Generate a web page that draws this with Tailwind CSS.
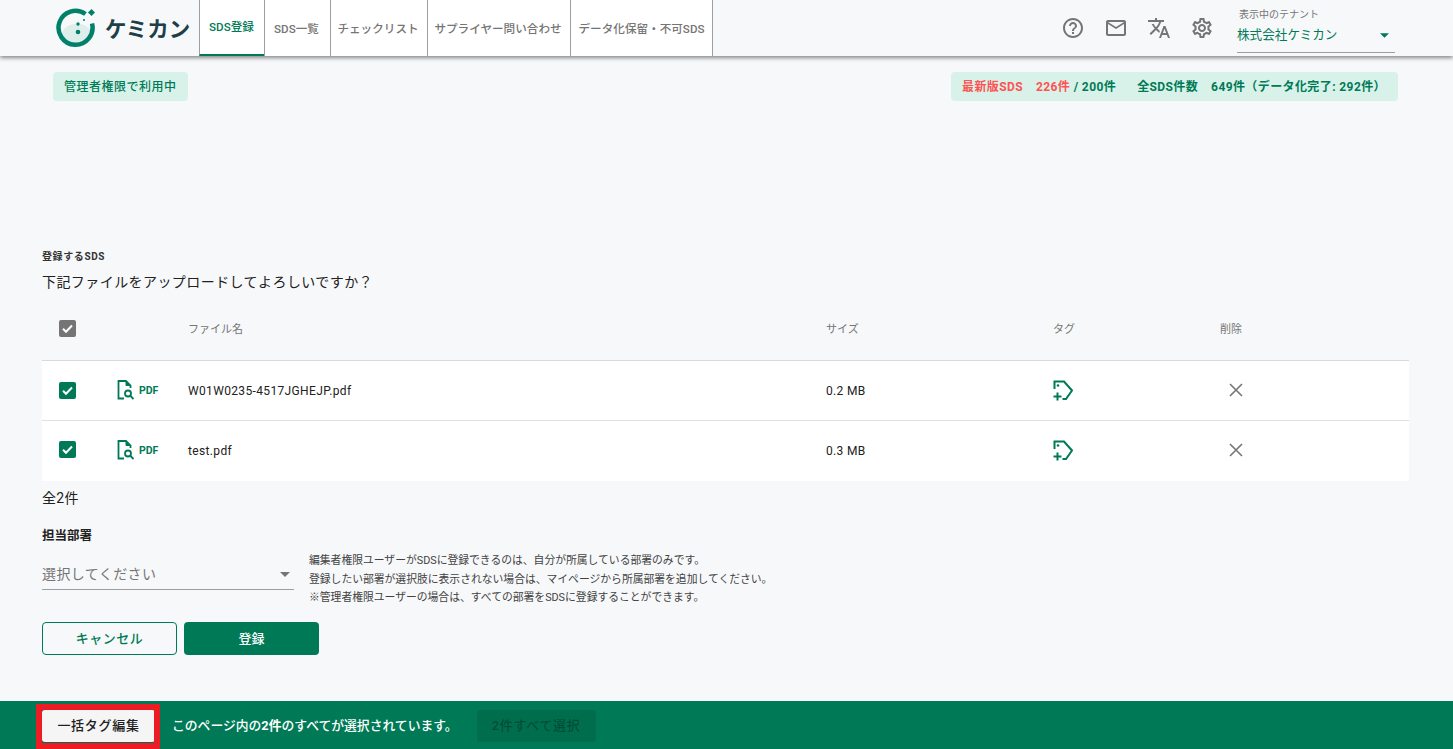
<!DOCTYPE html>
<html lang="ja">
<head>
  <meta charset="UTF-8" />
  <title>ケミカン</title>
  <script src="https://cdn.jsdelivr.net/npm/@tailwindcss/browser@4"></script>
</head>
<body class="h-[749px] overflow-hidden flex flex-col bg-[#f7f8fa] text-[#212121] font-['Roboto','Noto_Sans_CJK_JP',sans-serif]">

  <!-- header -->
  <header class="h-[56px] shrink-0 flex items-stretch bg-[#f7f8fa] shadow-[0_2px_4px_rgba(0,0,0,0.45)] relative pl-[56px] pr-[58px]">
    <div class="w-[143px] flex items-center gap-[8px]">
      <svg width="41" height="40" viewBox="0 0 41 40" class="shrink-0">
        <path d="M5 27 C9 13 30 12 35 24 C33 30 27 35 20 35 C13 35 8 32 5 27 Z" fill="#deeeea" />
        <path d="M29.500 6 A17 17 0 1 0 36 15.500" fill="none" stroke="#00806a" stroke-width="4.500" />
        <circle cx="22" cy="16" r="1.700" fill="#00806a" />
        <circle cx="22" cy="24" r="2.300" fill="#00806a" />
        <circle cx="28" cy="12" r="1" fill="#00806a" />
        <rect x="33" y="2" width="5" height="5" transform="rotate(45 35.500 4.500)" fill="#00806a" />
      </svg>
      <span class="text-[21.500px] leading-none font-bold pt-[3px] text-[#1d3f47] whitespace-nowrap">ケミカン</span>
    </div>
    <nav class="flex text-[11.6px] font-medium text-[#757575] border-r border-[#9e9e9e]">
      <a class="w-[65px] pt-[1px] pr-[1px] flex items-center justify-center bg-white border-l border-[#9e9e9e] border-b-2 border-b-[#007a56] text-[#007a56]">SDS登録</a>
      <a class="w-[66px] pt-[3px] pr-[2px] flex items-center justify-center bg-white border-l border-[#9e9e9e]">SDS一覧</a>
      <a class="w-[97px] pt-[3px] pr-[2px] flex items-center justify-center bg-white border-l border-[#9e9e9e]">チェックリスト</a>
      <a class="w-[143px] pt-[3px] pr-[2px] flex items-center justify-center bg-white border-l border-[#9e9e9e]">サプライヤー問い合わせ</a>
      <a class="w-[142px] pt-[3px] flex items-center justify-center bg-white border-l border-[#9e9e9e]">データ化保留・不可SDS</a>
    </nav>
    <div class="ml-auto flex items-center text-[#757575]">
      <div class="flex items-center gap-[19px] mr-[23px]">
        <svg width="24" height="24" viewBox="0 0 24 24" fill="currentColor"><path d="M11 18h2v-2h-2v2zm1-16C6.480 2 2 6.480 2 12s4.480 10 10 10 10-4.480 10-10S17.520 2 12 2zm0 18c-4.410 0-8-3.590-8-8s3.590-8 8-8 8 3.590 8 8-3.590 8-8 8zm0-14c-2.210 0-4 1.790-4 4h2c0-1.100.9-2 2-2s2 .9 2 2c0 2-3 1.750-3 5h2c0-2.250 3-2.500 3-5 0-2.210-1.790-4-4-4z"/></svg>
        <svg width="24" height="24" viewBox="0 0 24 24" fill="currentColor"><path d="M22 6c0-1.100-.9-2-2-2H4c-1.100 0-2 .9-2 2v12c0 1.100.9 2 2 2h16c1.100 0 2-.9 2-2V6zm-2 0l-8 5-8-5h16zm0 12H4V8l8 5 8-5v10z"/></svg>
        <svg width="24" height="24" viewBox="0 0 24 24" fill="currentColor"><path d="M12.870 15.070l-2.540-2.510.03-.03c1.740-1.940 2.980-4.170 3.710-6.530H17V4h-7V2H8v2H1v1.990h11.170C11.500 7.920 10.440 9.750 9 11.350 8.070 10.320 7.300 9.190 6.690 8h-2c.73 1.630 1.730 3.170 2.980 4.560l-5.090 5.020L4 19l5-5 3.110 3.110.76-2.040zM18.500 10h-2L12 22h2l1.120-3h4.750L21 22h2l-4.500-12zm-2.620 7l1.620-4.330L19.120 17h-3.240z"/></svg>
        <svg width="24" height="24" viewBox="0 0 24 24" fill="currentColor"><path d="M19.430 12.980c.04-.32.070-.64.070-.98 0-.34-.03-.66-.07-.98l2.110-1.650c.19-.15.240-.42.120-.64l-2-3.460c-.09-.16-.26-.25-.44-.25-.06 0-.12.010-.17.030l-2.490 1c-.52-.4-1.080-.73-1.690-.98l-.38-2.650C14.460 2.180 14.250 2 14 2h-4c-.25 0-.46.180-.49.420l-.38 2.650c-.61.250-1.170.59-1.690.98l-2.490-1c-.06-.02-.12-.03-.18-.03-.17 0-.34.090-.43.250l-2 3.460c-.13.220-.07.490.12.640l2.110 1.650c-.04.320-.07.650-.07.980 0 .33.030.66.070.98l-2.110 1.650c-.19.150-.24.420-.12.640l2 3.460c.09.160.26.250.44.250.06 0 .12-.01.170-.03l2.490-1c.52.400 1.080.730 1.690.980l.38 2.650c.03.240.24.420.49.420h4c.25 0 .46-.18.49-.42l.38-2.650c.61-.25 1.170-.59 1.690-.98l2.490 1c.06.020.12.030.18.030.17 0 .34-.09.43-.25l2-3.460c.12-.22.070-.49-.12-.64l-2.110-1.650zm-1.980-1.710c.04.310.05.520.05.730 0 .21-.02.430-.05.730l-.14 1.130.89.700 1.080.84-.7 1.210-1.270-.51-1.040-.42-.9.680c-.43.320-.84.560-1.250.730l-1.060.43-.16 1.130-.2 1.350h-1.400l-.19-1.350-.16-1.130-1.060-.43c-.43-.18-.83-.41-1.230-.71l-.91-.7-1.060.43-1.270.51-.7-1.210 1.080-.84.890-.7-.14-1.130c-.03-.31-.05-.54-.05-.74s.02-.43.050-.73l.14-1.130-.89-.7-1.080-.84.7-1.210 1.270.51 1.040.42.9-.68c.43-.32.84-.56 1.250-.73l1.060-.43.160-1.130.2-1.350h1.390l.19 1.350.16 1.130 1.060.43c.43.180.83.410 1.230.710l.91.700 1.060-.43 1.270-.51.7 1.210-1.070.85-.89.700.14 1.130zM12 8c-2.210 0-4 1.790-4 4s1.790 4 4 4 4-1.790 4-4-1.790-4-4-4zm0 6c-1.100 0-2-.9-2-2s.9-2 2-2 2 .9 2 2-.9 2-2 2z"/></svg>
      </div>
      <div class="w-[158px] h-[50px] border-b border-[#9e9e9e] relative">
        <div class="text-[10px] leading-[14px] mt-[5px] pl-[2px] text-[#757575]">表示中のテナント</div>
        <div class="flex items-center justify-between mt-[3px] text-[12.6px] leading-[20px] text-[#007a56]">
          <span>株式会社ケミカン</span>
          <svg width="9" height="5" viewBox="0 0 10 5" class="mr-[6px] mt-[1px]"><path d="M0 0h10L5 5z" fill="#007a56" /></svg>
        </div>
      </div>
    </div>
  </header>

  <main class="flex-1 min-h-0 px-[42px]">
    <div class="flex justify-between pl-[11px] pr-[11px] pt-[16px]">
      <div class="h-[29px] px-[11px] flex items-center rounded bg-[#d8f2ea] text-[12px] tracking-[0.5px] text-[#007a56] font-medium">管理者権限で利用中</div>
      <div class="w-[447px] h-[29px] mr-[2px] pl-[11px] flex items-center rounded bg-[#d8f2ea] text-[12px] tracking-[0.4px] text-[#007a56] font-bold whitespace-pre">
        <span class="text-[#ff5252]">最新版SDS</span><span class="ml-[13px] text-[#ff5252]">226件</span><span> / 200件</span><span class="ml-[21px]">全SDS件数</span><span class="ml-[13px]">649件（データ化完了: 292件）</span>
      </div>
    </div>

    <h2 class="mt-[149px] text-[10px] tracking-[0.6px] leading-[14px] font-bold text-[#333]">登録するSDS</h2>
    <p class="mt-[8px] text-[14px] tracking-[0.43px] leading-[20px]">下記ファイルをアップロードしてよろしいですか？</p>

    <table class="w-[1367px] mt-[6px] table-fixed border-collapse">
      <thead>
        <tr class="h-[62px] text-[11px] text-[#757575] border-b border-[#d9d9d9] text-left">
          <th class="w-[146px] pl-[17px] font-normal">
            <span class="w-[17px] h-[17px] rounded-[2px] bg-[#757575] flex items-center justify-center">
              <svg width="13" height="13" viewBox="0 0 13 13"><path d="M2 6.800l3 3 6-6.300" fill="none" stroke="#fff" stroke-width="2" /></svg>
            </span>
          </th>
          <th class="w-[638px] pt-[2px] font-normal">ファイル名</th>
          <th class="w-[227px] pt-[2px] font-normal">サイズ</th>
          <th class="w-[167px] pt-[2px] font-normal">タグ</th>
          <th class="pt-[2px] font-normal">削除</th>
        </tr>
      </thead>
      <tbody class="bg-white text-[12px] tracking-[0.35px]">
        <tr class="h-[60px] border-b border-[#e0e0e0]">
          <td class="pl-[17px]">
            <div class="flex items-center">
              <span class="w-[17px] h-[17px] rounded-[2px] bg-[#007a56] flex items-center justify-center">
                <svg width="13" height="13" viewBox="0 0 13 13"><path d="M2 6.800l3 3 6-6.300" fill="none" stroke="#fff" stroke-width="2" /></svg>
              </span>
              <svg width="19" height="20" viewBox="0 0 19 20" class="ml-[41px]" fill="none" stroke="#007a56"><path d="M7 18.500H1.500V1H9l4.500 4.500V8" stroke-width="1.800" /><path d="M9 1v4.500h4.500z" fill="#007a56" stroke-width="1" /><circle cx="11" cy="13.500" r="3" stroke-width="1.800" /><path d="M13.200 15.700l3.300 3.300" stroke-width="1.800" /></svg>
              <span class="ml-[3px] pt-[2px] text-[10.500px] tracking-normal font-bold text-[#007a56]">PDF</span>
            </div>
          </td>
          <td class="pt-[1px]">W01W0235-4517JGHEJP.pdf</td>
          <td class="pt-[1px]">0.2 MB</td>
          <td>
            <svg width="20" height="21" viewBox="0 0 20 21" fill="none" stroke="#007a56" stroke-width="2"><path d="M1.500 9V1.500H11L19 10.500l-6 8.500H9.500" /><circle cx="5" cy="5.500" r="1.300" fill="#007a56" stroke="none" /><path d="M4.500 12.500v8M0.500 16.500h8" /></svg>
          </td>
          <td class="pl-[9px]">
            <svg width="14" height="14" viewBox="0 0 14 14" stroke="#757575" stroke-width="1.600"><path d="M1 1l12 12M13 1L1 13" /></svg>
          </td>
        </tr>
        <tr class="h-[60px]">
          <td class="pl-[17px]">
            <div class="flex items-center mb-[1px]">
              <span class="w-[17px] h-[17px] rounded-[2px] bg-[#007a56] flex items-center justify-center">
                <svg width="13" height="13" viewBox="0 0 13 13"><path d="M2 6.800l3 3 6-6.300" fill="none" stroke="#fff" stroke-width="2" /></svg>
              </span>
              <svg width="19" height="20" viewBox="0 0 19 20" class="ml-[41px]" fill="none" stroke="#007a56"><path d="M7 18.500H1.500V1H9l4.500 4.500V8" stroke-width="1.800" /><path d="M9 1v4.500h4.500z" fill="#007a56" stroke-width="1" /><circle cx="11" cy="13.500" r="3" stroke-width="1.800" /><path d="M13.200 15.700l3.300 3.300" stroke-width="1.800" /></svg>
              <span class="ml-[3px] pt-[3px] text-[10.500px] tracking-normal font-bold text-[#007a56]">PDF</span>
            </div>
          </td>
          <td class="pt-[1px]">test.pdf</td>
          <td class="pt-[1px]">0.3 MB</td>
          <td>
            <svg width="20" height="21" viewBox="0 0 20 21" fill="none" stroke="#007a56" stroke-width="2"><path d="M1.500 9V1.500H11L19 10.500l-6 8.500H9.500" /><circle cx="5" cy="5.500" r="1.300" fill="#007a56" stroke="none" /><path d="M4.500 12.500v8M0.500 16.500h8" /></svg>
          </td>
          <td class="pl-[9px]">
            <svg width="14" height="14" viewBox="0 0 14 14" stroke="#757575" stroke-width="1.600"><path d="M1 1l12 12M13 1L1 13" /></svg>
          </td>
        </tr>
        <tr class="h-[1px]"><td colspan="5"></td></tr>
      </tbody>
    </table>

    <p class="mt-[7px] text-[14px] tracking-[0.3px] leading-[20px]">全2件</p>
    <h3 class="mt-[20px] text-[12.500px] leading-[16px] font-bold">担当部署</h3>

    <div class="flex mt-[8px]">
      <div class="w-[252px] h-[38px] border-b border-[#9e9e9e] flex items-center justify-between text-[#757575]">
        <span class="text-[14px] tracking-[0.4px] mt-[8px]">選択してください</span>
        <svg width="10" height="5" viewBox="0 0 10 5" class="mr-[4px] mt-[8px]"><path d="M0 0h10L5 5z" fill="#757575" /></svg>
      </div>
      <div class="ml-[15px] text-[10.800px] leading-[18.500px] text-[#424242]">
        <p>編集者権限ユーザーがSDSに登録できるのは、自分が所属している部署のみです。</p>
        <p>登録したい部署が選択肢に表示されない場合は、マイページから所属部署を追加してください。</p>
        <p>※管理者権限ユーザーの場合は、すべての部署をSDSに登録することができます。</p>
      </div>
    </div>

    <div class="flex gap-[7px] mt-[14px]">
      <button class="w-[135px] h-[33px] pt-[2px] rounded bg-white/0 border border-[#007a56] text-[13px] font-medium text-[#007a56] tracking-[0.5px]">キャンセル</button>
      <button class="w-[135px] h-[33px] pt-[2px] rounded bg-[#007a56] text-[13px] font-medium text-white">登録</button>
    </div>
  </main>

  <!-- bottom bar -->
  <footer class="h-[48px] shrink-0 flex items-center pl-[42px] pt-[2px] bg-[#007a56] relative">
    <button class="w-[113px] h-[32px] rounded-[3px] bg-[#f5f5f5] text-[13px] font-medium text-[#212121] tracking-[0.7px] shadow">一括タグ編集</button>
    <p class="ml-[17px] text-[12.800px] font-medium text-white">このページ内の<b>2件</b>のすべてが選択されています。</p>
    <button class="ml-[19px] w-[119px] h-[32px] rounded-[3px] bg-black/10 text-[13px] tracking-[0.7px] font-medium text-black/30">2件すべて選択</button>
    <div class="absolute left-[36px] top-[3px] w-[124px] h-[45px] border-[6px] border-[#ed1c24] pointer-events-none"></div>
  </footer>
</body>
</html>
